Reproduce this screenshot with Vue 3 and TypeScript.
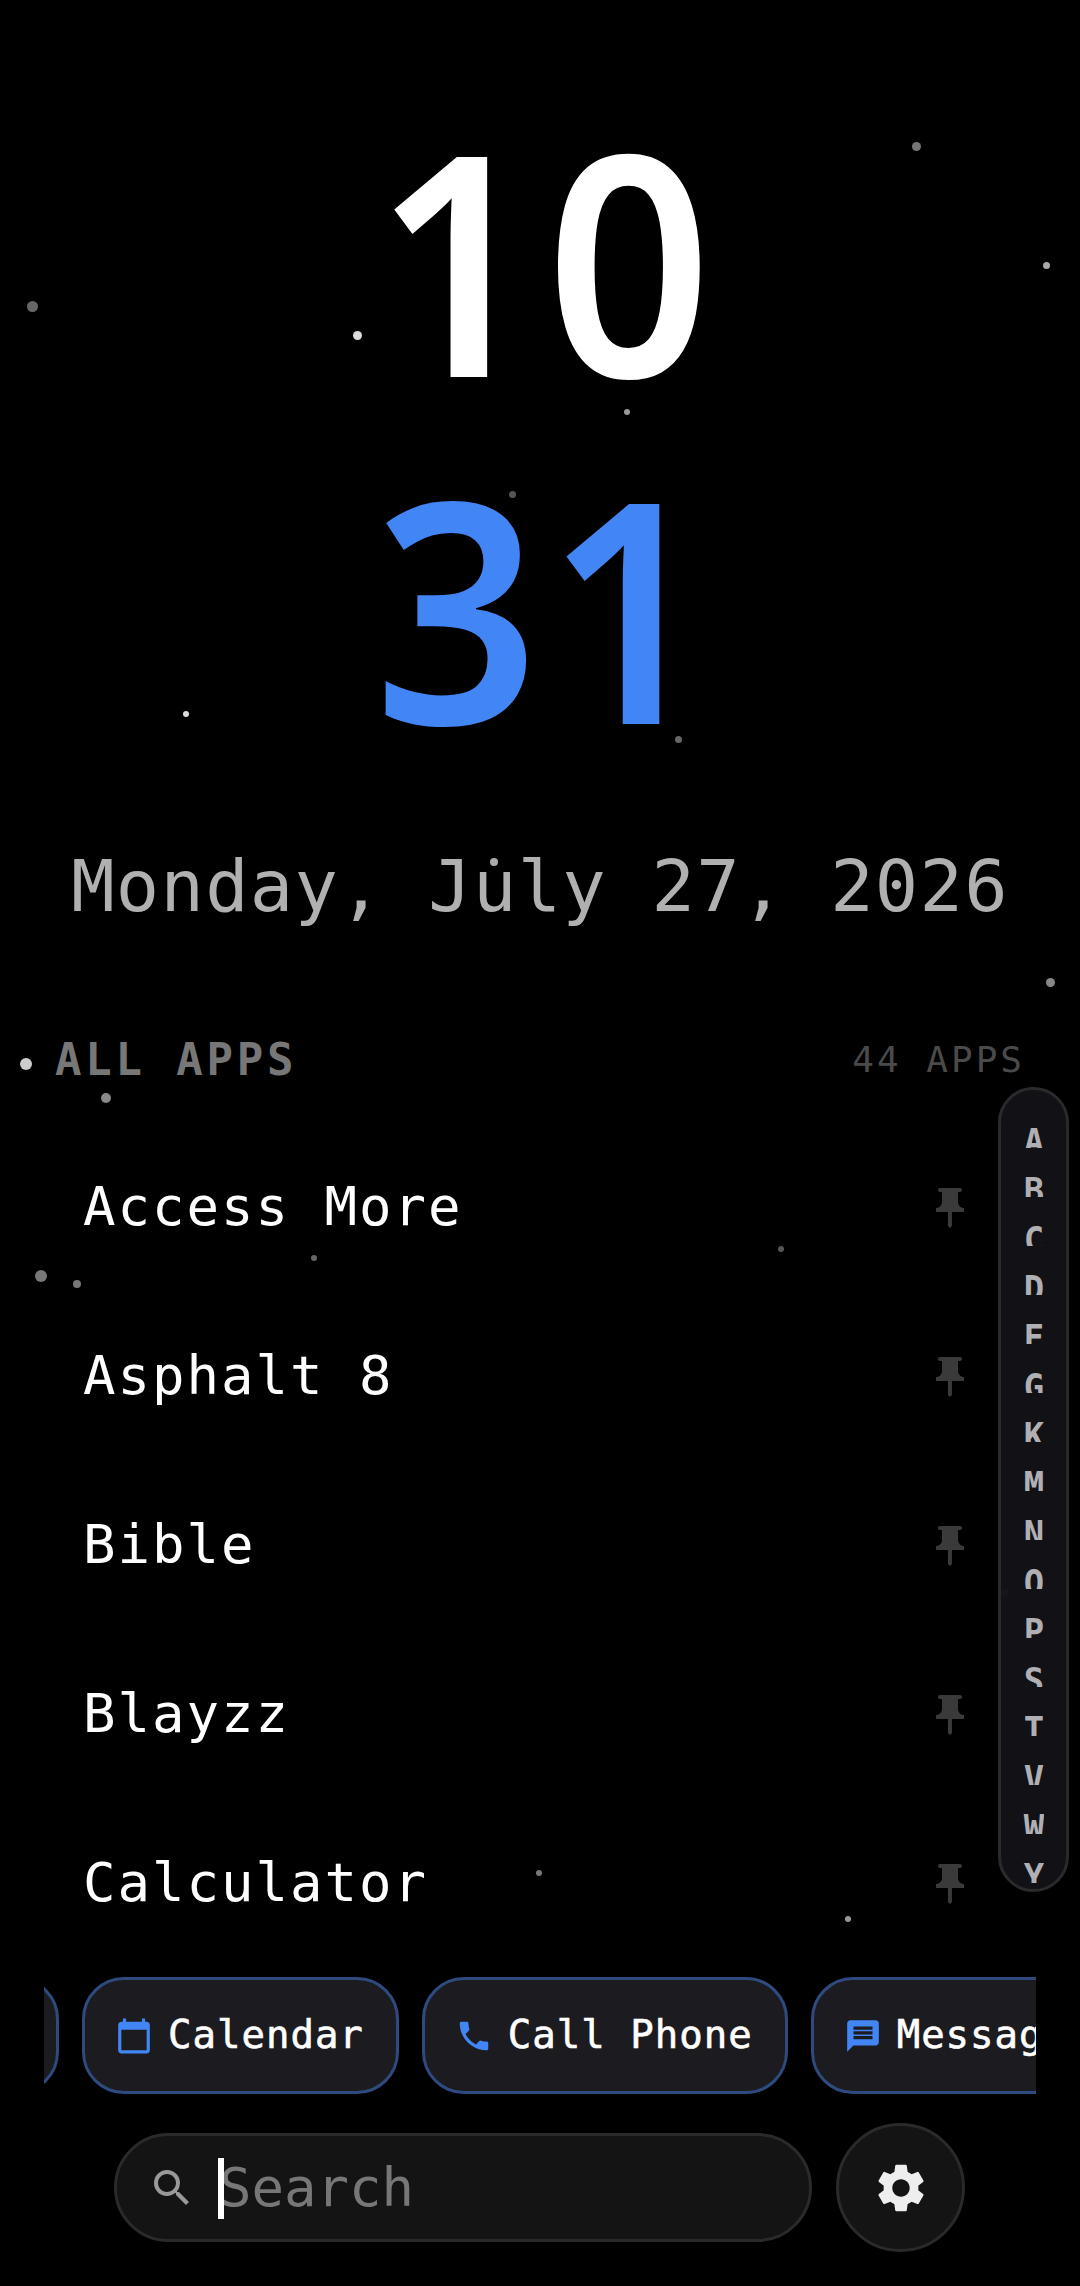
<template>
  <div class="launcher">
    <span
      v-for="(star, i) in stars"
      :key="i"
      class="star"
      :style="{ left: `${star.x - star.r}px`, top: `${star.y - star.r}px`, width: `${star.r * 2}px`, height: `${star.r * 2}px`, background: star.c }" />

    <div class="clock">
      <div class="clock__line">10</div>
      <div class="clock__line clock__line--accent">31</div>
    </div>
    <div class="date">Monday, July 27, 2026</div>

    <div class="section">
      <span class="section__title">ALL APPS</span>
      <span class="section__count">44 APPS</span>
    </div>

    <div class="apps">
      <div v-for="app in apps" :key="app" class="app">
        <span class="app__name">{{ app }}</span>
        <svg class="app__pin" viewBox="0 0 24 24" aria-hidden="true">
          <path d="M16 9V4h1c.55 0 1-.45 1-1s-.45-1-1-1H7c-.55 0-1 .45-1 1s.45 1 1 1h1v5c0 1.66-1.34 3-3 3v2h5.97v7l1 1 1-1v-7H19v-2c-1.66 0-3-1.34-3-3z" />
        </svg>
      </div>
    </div>

    <div class="rail">
      <div v-for="letter in letters" :key="letter" class="rail__letter">
        <span>{{ letter }}</span>
      </div>
    </div>

    <div class="chips">
      <div class="chips__track">
        <div class="chip chip--cut"></div>
        <div v-for="chip in chips" :key="chip.label" class="chip">
          <svg class="chip__icon" viewBox="0 0 24 24" aria-hidden="true"><path :d="chip.icon" /></svg>
          <span class="chip__label">{{ chip.label }}</span>
        </div>
      </div>
    </div>

    <div class="bottom">
      <div class="search">
        <svg class="search__icon" viewBox="0 0 24 24" aria-hidden="true">
          <path d="M15.5 14h-.79l-.28-.27A6.47 6.47 0 0 0 16 9.5 6.5 6.5 0 1 0 9.5 16c1.61 0 3.09-.59 4.23-1.57l.27.28v.79l5 4.99L20.49 19l-4.99-5zm-6 0C7.01 14 5 11.99 5 9.5S7.01 5 9.5 5 14 7.01 14 9.5 11.99 14 9.5 14z" />
        </svg>
        <span class="search__text">Search</span>
        <i class="search__caret"></i>
      </div>
      <div class="settings">
        <svg class="settings__icon" viewBox="0 0 24 24" aria-hidden="true">
          <path d="M19.14 12.94c.04-.3.06-.61.06-.94 0-.32-.02-.64-.07-.94l2.03-1.58c.18-.14.23-.41.12-.61l-1.92-3.32c-.12-.22-.37-.29-.59-.22l-2.39.96c-.5-.38-1.03-.7-1.62-.94l-.36-2.54c-.04-.24-.24-.41-.48-.41h-3.84c-.24 0-.43.17-.47.41l-.36 2.54c-.59.24-1.13.57-1.62.94l-2.39-.96c-.22-.08-.47 0-.59.22L2.74 8.87c-.12.21-.08.47.12.61l2.03 1.58c-.05.3-.09.63-.09.94s.02.64.07.94l-2.03 1.58c-.18.14-.23.41-.12.61l1.92 3.32c.12.22.37.29.59.22l2.39-.96c.5.38 1.03.7 1.62.94l.36 2.54c.05.24.24.41.48.41h3.84c.24 0 .44-.17.47-.41l.36-2.54c.59-.24 1.13-.56 1.62-.94l2.39.96c.22.08.47 0 .59-.22l1.92-3.32c.12-.22.07-.47-.12-.61l-2.01-1.58zM12 15.6c-1.98 0-3.6-1.62-3.6-3.6s1.62-3.6 3.6-3.6 3.6 1.62 3.6 3.6-1.62 3.6-3.6 3.6z" />
        </svg>
      </div>
    </div>
  </div>
</template>

<script setup lang="ts">
interface Star {
  x: number
  y: number
  r: number
  c: string
}

const stars: Star[] = [
  { x: 916, y: 146, r: 4.5, c: '#777' },
  { x: 1046, y: 265, r: 3.5, c: '#aaa' },
  { x: 32, y: 306, r: 5.5, c: '#666' },
  { x: 357, y: 335, r: 4.5, c: '#ddd' },
  { x: 627, y: 412, r: 3, c: '#999' },
  { x: 512, y: 494, r: 3.5, c: '#555' },
  { x: 186, y: 714, r: 3, c: '#ddd' },
  { x: 678, y: 739, r: 3.5, c: '#666' },
  { x: 494, y: 862, r: 4, c: '#aaa' },
  { x: 1050, y: 982, r: 4.5, c: '#888' },
  { x: 26, y: 1064, r: 6, c: '#ccc' },
  { x: 106, y: 1098, r: 5, c: '#888' },
  { x: 41, y: 1276, r: 6, c: '#777' },
  { x: 77, y: 1284, r: 4, c: '#777' },
  { x: 314, y: 1258, r: 3, c: '#666' },
  { x: 781, y: 1249, r: 3, c: '#555' },
  { x: 539, y: 1873, r: 3, c: '#777' },
  { x: 848, y: 1919, r: 3, c: '#999' },
  { x: 1005, y: 1593, r: 4, c: '#333' },
]

const apps = ['Access More', 'Asphalt 8', 'Bible', 'Blayzz', 'Calculator', 'Calendar']

const letters = ['A', 'B', 'C', 'D', 'E', 'G', 'K', 'M', 'N', 'O', 'P', 'S', 'T', 'V', 'W', 'Y']

const chips = [
  {
    label: 'Calendar',
    icon: 'M20 3h-1V1h-2v2H7V1H5v2H4c-1.1 0-2 .9-2 2v16c0 1.1.9 2 2 2h16c1.1 0 2-.9 2-2V5c0-1.1-.9-2-2-2zm0 18H4V8h16v13z',
  },
  {
    label: 'Call Phone',
    icon: 'M6.62 10.79c1.44 2.83 3.76 5.14 6.59 6.59l2.2-2.2c.27-.27.67-.36 1.02-.24 1.12.37 2.33.57 3.57.57.55 0 1 .45 1 1V20c0 .55-.45 1-1 1-9.39 0-17-7.61-17-17 0-.55.45-1 1-1h3.5c.55 0 1 .45 1 1 0 1.25.2 2.45.57 3.57.11.35.03.74-.25 1.02l-2.2 2.2z',
  },
  {
    label: 'Messages',
    icon: 'M20 2H4c-1.1 0-1.99.9-1.99 2L2 22l4-4h14c1.1 0 2-.9 2-2V4c0-1.1-.9-2-2-2zm-2 12H6v-2h12v2zm0-3H6V9h12v2zm0-3H6V6h12v2z',
  },
]
</script>

<style>
html,
body {
  background: #000;
}
</style>

<style scoped>
.launcher {
  position: relative;
  display: flex;
  flex-direction: column;
  width: 1080px;
  height: 2286px;
  overflow: hidden;
  background: #000;
  font-family: 'DejaVu Sans Mono', monospace;
}

.star {
  position: absolute;
  border-radius: 50%;
}

.clock {
  position: relative;
  padding: 84px 0 0 13px;
  font-family: 'Noto Sans', sans-serif;
  font-size: 308px;
  font-weight: 600;
  line-height: 347px;
  letter-spacing: 7px;
  text-align: center;
  color: #fff;
  transform: scaleX(0.94);
}

.clock__line--accent {
  color: #4285f4;
}

.date {
  position: relative;
  margin-top: 58px;
  font-size: 72px;
  line-height: 100px;
  letter-spacing: 1.3px;
  text-align: center;
  color: #b0b0b0;
}

.section {
  position: relative;
  display: flex;
  justify-content: space-between;
  align-items: center;
  height: 44px;
  margin-top: 101px;
  padding: 0 55px 0 55px;
}

.section__title {
  font-size: 44px;
  font-weight: 700;
  letter-spacing: 3.8px;
  color: #777;
}

.section__count {
  font-size: 36px;
  letter-spacing: 3px;
  color: #4a4a4a;
}

.apps {
  position: relative;
  flex: 1;
  min-height: 0;
  margin-top: 41px;
  overflow: hidden;
}

.app {
  display: flex;
  align-items: center;
  justify-content: space-between;
  height: 169px;
  padding: 0 106px 0 83px;
}

.app__name {
  font-size: 54px;
  letter-spacing: 2px;
  color: #fff;
}

.app__pin {
  width: 48px;
  height: 48px;
  margin-top: 2px;
  fill: #3a3a3a;
}

.rail {
  position: absolute;
  top: 1087px;
  right: 11px;
  display: flex;
  flex-direction: column;
  align-items: center;
  gap: 28px;
  box-sizing: border-box;
  width: 71px;
  height: 805px;
  padding-top: 37px;
  background: rgba(20, 20, 24, 0.92);
  border: 3px solid #2a2a2c;
  border-radius: 36px;
}

.rail__letter {
  height: 21px;
  overflow: hidden;
  font-size: 36px;
  font-weight: 700;
  line-height: 29px;
  color: #b0b0b4;
}

.rail__letter span {
  display: block;
  transform: scaleX(0.94);
}

.chips {
  position: relative;
  margin: 0 44px;
  overflow: hidden;
}

.chips__track {
  display: flex;
  gap: 23px;
  width: max-content;
  margin-left: -185px;
}

.chip {
  display: flex;
  align-items: center;
  gap: 15px;
  box-sizing: border-box;
  height: 117px;
  padding: 0 32px 0 30px;
  background: #1c1c20;
  border: 3px solid #2e4a7f;
  border-radius: 42px;
}

.chip--cut {
  width: 200px;
}

.chip__icon {
  flex: none;
  width: 38px;
  height: 38px;
  fill: #4285f4;
}

.chip__label {
  margin-top: -3px;
  font-size: 39px;
  letter-spacing: 1px;
  color: #fff;
  -webkit-text-stroke: 0.6px #fff;
}

.bottom {
  position: relative;
  display: flex;
  align-items: center;
  gap: 24px;
  height: 129px;
  margin-top: 29px;
  margin-bottom: 34px;
  padding: 0 115px 0 114px;
}

.search {
  position: relative;
  flex: 1;
  display: flex;
  align-items: center;
  gap: 23px;
  box-sizing: border-box;
  height: 109px;
  padding-left: 31px;
  background: #141414;
  border: 3px solid #2a2a2a;
  border-radius: 55px;
}

.search__icon {
  flex: none;
  width: 48px;
  height: 48px;
  fill: #999;
}

.search__text {
  font-size: 54px;
  color: #777;
}

.search__caret {
  position: absolute;
  left: 101px;
  top: 22px;
  width: 6px;
  height: 61px;
  background: #fff;
}

.settings {
  flex: none;
  display: flex;
  align-items: center;
  justify-content: center;
  box-sizing: border-box;
  width: 129px;
  height: 129px;
  background: #141414;
  border: 3px solid #2a2a2a;
  border-radius: 50%;
}

.settings__icon {
  width: 58px;
  height: 58px;
  fill: #eee;
}
</style>
